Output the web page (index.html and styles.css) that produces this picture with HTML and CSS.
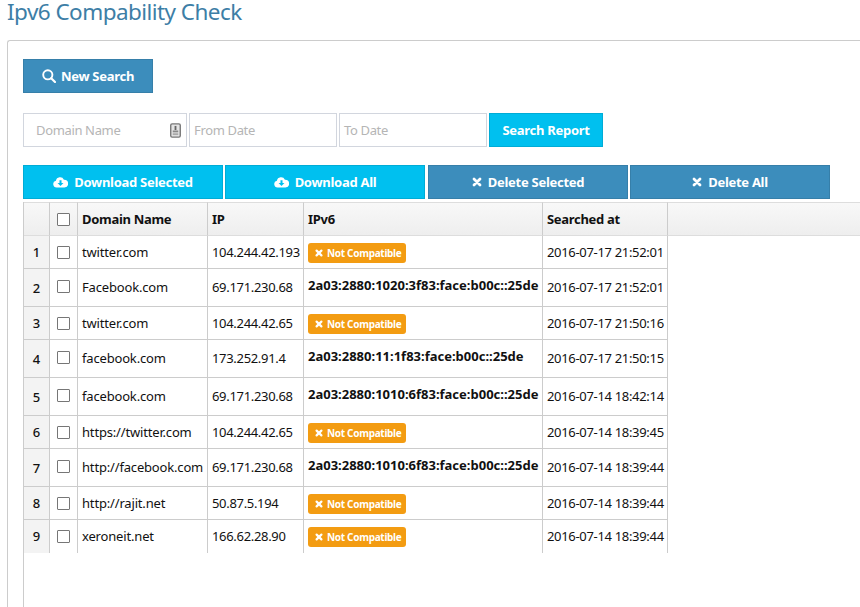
FILE: index.html
```html
<!DOCTYPE html>
<html>
<head>
  <title>Ipv6 Compability Check</title>
  <link rel="stylesheet" href="styles.css">
</head>
<body>
  <h1 class="page-title">Ipv6 Compability Check</h1>

  <div class="panel">
    <button class="btn btn-blue btn-new">
      <svg class="icon-search" viewBox="0 0 14 14"><circle cx="5.8" cy="5.8" r="4.6" fill="none" stroke="#fff" stroke-width="1.9"/><path d="M9.2 9.2L13 13" stroke="#fff" stroke-width="2.2" stroke-linecap="round"/></svg>
      New Search
    </button>

    <div class="search-row">
      <div class="field field-domain">
        <span>Domain Name</span>
        <svg class="icon-card" viewBox="0 0 12 16"><rect x="0.8" y="0.8" width="10.4" height="14.4" rx="1.5" fill="#e4e4e4" stroke="#777" stroke-width="1.5"/><path d="M5 3h2v4.500H5z" fill="#666"/><path d="M3 8h6v2H3z" fill="#888"/><path d="M3 11h6v2H3z" fill="#aaa"/></svg>
      </div>
      <div class="field field-date"><span>From Date</span></div>
      <div class="field field-date"><span>To Date</span></div>
      <button class="btn btn-cyan btn-report">Search Report</button>
    </div>

    <div class="action-row">
      <button class="btn btn-cyan btn-action">
        <svg class="icon-cloud" viewBox="0 0 16 13"><path fill="#fff" fill-rule="evenodd" d="M4 12.500A3.700 3.700 0 0 1 3 5.200 4.600 4.600 0 0 1 11.700 4 4.200 4.200 0 0 1 12.300 12.500zM6.900 4.500v3H4.800L8 10.800l3.200-3.300H9.100v-3z"/></svg>
        Download Selected
      </button>
      <button class="btn btn-cyan btn-action">
        <svg class="icon-cloud" viewBox="0 0 16 13"><path fill="#fff" fill-rule="evenodd" d="M4 12.500A3.700 3.700 0 0 1 3 5.200 4.600 4.600 0 0 1 11.700 4 4.200 4.200 0 0 1 12.300 12.500zM6.900 4.500v3H4.800L8 10.800l3.200-3.300H9.100v-3z"/></svg>
        Download All
      </button>
      <button class="btn btn-blue btn-action btn-gap">
        <svg class="icon-x" viewBox="0 0 10 10"><path d="M2 2l6 6M8 2l-6 6" stroke="#fff" stroke-width="2.8" stroke-linecap="round"/></svg>
        Delete Selected
      </button>
      <button class="btn btn-blue btn-action">
        <svg class="icon-x" viewBox="0 0 10 10"><path d="M2 2l6 6M8 2l-6 6" stroke="#fff" stroke-width="2.8" stroke-linecap="round"/></svg>
        Delete All
      </button>
    </div>

    <div class="grid-wrap">
      <table class="grid">
        <colgroup>
          <col class="c-num"><col class="c-check"><col class="c-domain"><col class="c-ip"><col class="c-ipv6"><col class="c-date"><col>
        </colgroup>
        <thead>
          <tr>
            <th></th>
            <th class="check"><span class="box"></span></th>
            <th>Domain Name</th>
            <th>IP</th>
            <th>IPv6</th>
            <th>Searched at</th>
            <th class="filler"></th>
          </tr>
        </thead>
        <tbody id="rows"></tbody>
      </table>
    </div>
  </div>

  <script>
    const rows = [
      ['twitter.com', '104.244.42.193', '', '2016-07-17 21:52:01'],
      ['Facebook.com', '69.171.230.68', '2a03:2880:1020:3f83:face:b00c::25de', '2016-07-17 21:52:01'],
      ['twitter.com', '104.244.42.65', '', '2016-07-17 21:50:16'],
      ['facebook.com', '173.252.91.4', '2a03:2880:11:1f83:face:b00c::25de', '2016-07-17 21:50:15'],
      ['facebook.com', '69.171.230.68', '2a03:2880:1010:6f83:face:b00c::25de', '2016-07-14 18:42:14'],
      ['https://twitter.com', '104.244.42.65', '', '2016-07-14 18:39:45'],
      ['http://facebook.com', '69.171.230.68', '2a03:2880:1010:6f83:face:b00c::25de', '2016-07-14 18:39:44'],
      ['http://rajit.net', '50.87.5.194', '', '2016-07-14 18:39:44'],
      ['xeroneit.net', '166.62.28.90', '', '2016-07-14 18:39:44']
    ];

    const badge = '<span class="badge"><svg class="icon-x-small" viewBox="0 0 10 10"><path d="M2 2l6 6M8 2l-6 6" stroke="#fff" stroke-width="2.8" stroke-linecap="round"/></svg>Not Compatible</span>';

    // Rows with an address come out taller than rows with a badge
    document.getElementById('rows').innerHTML = rows.map((r, i) => `
      <tr class="${r[2] ? 'tall' : 'short'}">
        <td class="num">${i + 1}</td>
        <td class="check"><span class="box"></span></td>
        <td class="domain">${r[0]}</td>
        <td class="digits">${r[1]}</td>
        <td class="${r[2] ? 'addr' : 'state'}">${r[2] || badge}</td>
        <td class="digits">${r[3]}</td>
      </tr>`).join('');
  </script>
</body>
</html>
```
FILE: styles.css
```css
html, body {
  height: 100%;
}

body {
  margin: 0;
  overflow: hidden;
  background-color: #fff;
  color: #111;
  font-family: "Noto Sans", "Open Sans", sans-serif;
  font-size: 13px;
}

.page-title {
  margin: 0;
  padding-left: 7px;
  height: 40px;
  font-size: 22.5px;
  line-height: 24px;
  letter-spacing: -0.55px;
  font-weight: 400;
  color: #3d7ea6;
}

.panel {
  box-sizing: border-box;
  height: 567px;
  margin-left: 7px;
  padding: 18px 0 0 15px;
  border-top: 1px solid #ccc;
  border-left: 1px solid #ccc;
  border-top-left-radius: 3px;
}

.btn {
  box-sizing: border-box;
  display: inline-flex;
  align-items: center;
  justify-content: center;
  height: 34px;
  padding: 0;
  border: 1px solid;
  font-family: inherit;
  font-size: 13px;
  font-weight: 700;
  letter-spacing: -0.28px;
  color: #fff;
}

.btn-blue {
  background-color: #3c8dbc;
  border-color: #367fa9;
}

.btn-cyan {
  background-color: #00c0ef;
  border-color: #00acd6;
}

.btn-new {
  width: 130px;
  gap: 5px;
}

.icon-search {
  width: 14px;
  height: 14px;
}

.search-row {
  display: flex;
  gap: 2px;
  margin-top: 20px;
}

.field {
  box-sizing: border-box;
  display: flex;
  align-items: center;
  justify-content: space-between;
  height: 34px;
  border: 1px solid #d2d6de;
  color: #b5b5b5;
  letter-spacing: -0.35px;
}

.field-domain {
  width: 164px;
  padding: 0 5px 0 12px;
}

.field-date {
  width: 148px;
  padding-left: 4px;
}

.icon-card {
  width: 11px;
  height: 15px;
}

.btn-report {
  width: 114px;
}

.action-row {
  display: flex;
  gap: 2px;
  margin-top: 18px;
}

.btn-action {
  width: 200px;
  gap: 6px;
}

.btn-gap {
  margin-left: 1px;
}

.icon-cloud {
  width: 15px;
  height: 12px;
}

.icon-x {
  width: 10px;
  height: 10px;
}

.grid-wrap {
  box-sizing: border-box;
  height: 405px;
  margin-top: 3px;
  border-left: 1px solid #ccc;
}

.grid {
  width: 100%;
  table-layout: fixed;
  border-collapse: separate;
  border-spacing: 0;
}

.c-num { width: 26px; }
.c-check { width: 28px; }
.c-domain { width: 130px; }
.c-ip { width: 96px; }
.c-ipv6 { width: 239px; }
.c-date { width: 125px; }

th, td {
  box-sizing: border-box;
  padding: 0 0 0 4px;
  border-right: 1px solid #ccc;
  white-space: nowrap;
  text-align: left;
  overflow: hidden;
}

th {
  height: 34px;
  border-top: 1px solid #ddd;
  border-bottom: 1px solid #ddd;
  background: linear-gradient(#f8f8f8, #eee);
  font-weight: 700;
  letter-spacing: -0.3px;
  color: #111;
}

.filler {
  border-right: 0;
}

td {
  border-bottom: 1px solid #ccc;
}

.short td {
  height: 33px;
}

.tall td {
  height: 38px;
  padding-bottom: 2px;
}

tbody tr:last-child td {
  border-bottom: 0;
  padding-bottom: 1px;
}

.domain {
  letter-spacing: -0.17px;
}

.digits {
  letter-spacing: -0.32px;
}

td.num {
  padding: 0;
  text-align: center;
  font-weight: 500;
  background: #f3f3f3;
}

th.check,
td.check {
  padding-left: 7px;
}

.box {
  box-sizing: border-box;
  display: block;
  width: 13px;
  height: 13px;
  border: 1px solid #767676;
  border-radius: 1px;
  background: #fff;
}

.tall .addr {
  font-weight: 700;
  padding-bottom: 6px;
}

.badge {
  box-sizing: border-box;
  display: inline-flex;
  align-items: center;
  gap: 4px;
  width: 98px;
  height: 20px;
  margin-top: 2px;
  padding-left: 7px;
  border-radius: 3px;
  background-color: #f39c12;
  color: #fff;
  font-size: 10px;
  font-weight: 700;
  letter-spacing: -0.3px;
  vertical-align: middle;
}

.icon-x-small {
  width: 8px;
  height: 8px;
}
```
